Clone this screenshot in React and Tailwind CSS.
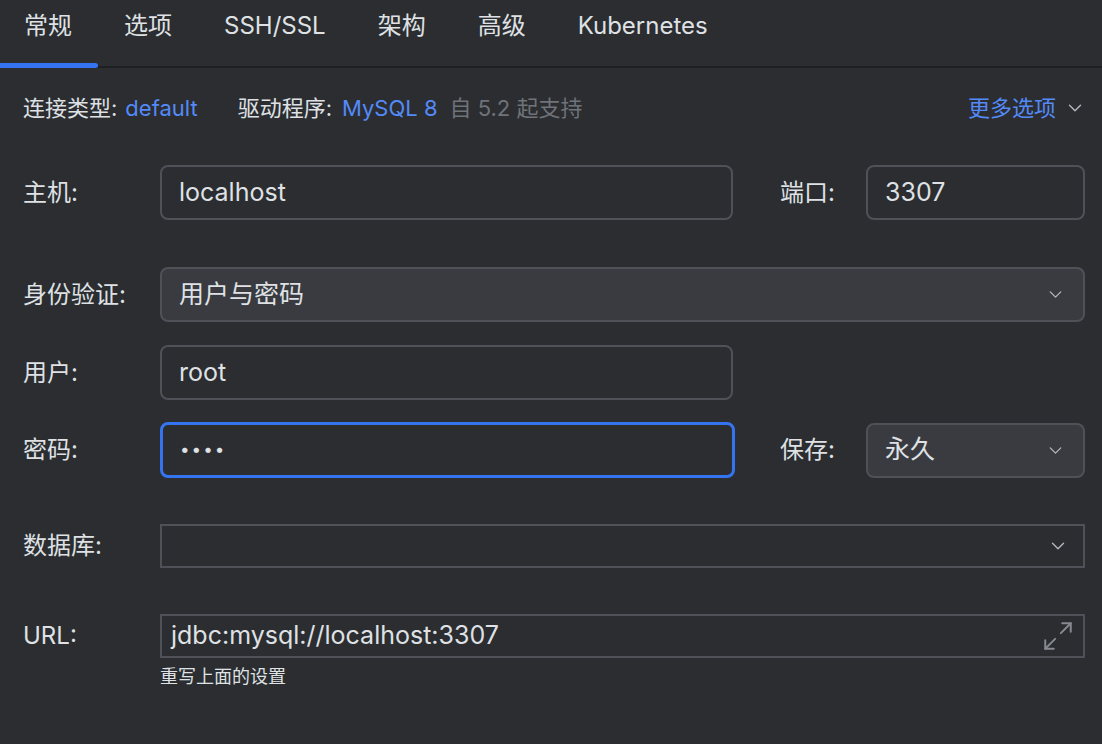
import React from 'react';
import { ChevronDown, Maximize2 } from 'lucide-react';

const font = { fontFamily: '"Inter", "Noto Sans CJK SC", sans-serif' };

const tabs = ['常规', '选项', 'SSH/SSL', '架构', '高级', 'Kubernetes'];

const Label = ({ children, className = '' }) => (
  <div className={`w-[137px] shrink-0 text-[24px] text-[#dfe1e5] ${className}`}>{children}</div>
);

const TextBox = ({ value, className = '' }) => (
  <div
    className={`flex items-center h-[55px] rounded-[8px] border-2 border-[#4e5157] px-[17px] text-[25px] text-[#dfe1e5] ${className}`}
  >
    {value}
  </div>
);

const Select = ({ value, className = '' }) => (
  <div
    className={`flex items-center justify-between h-[55px] rounded-[8px] border-2 border-[#4e5157] bg-[#393b40] px-[17px] text-[25px] text-[#dfe1e5] ${className}`}
  >
    <span>{value}</span>
    <ChevronDown size={21} strokeWidth={1.5} className="text-[#b4b8bf]" />
  </div>
);

export default function App() {
  return (
    <div className="w-[1102px] h-[744px] bg-[#2b2d30] overflow-hidden" style={font}>
      {/* tabs */}
      <div className="flex h-[68px] border-b-2 border-[#1e1f22]">
        {tabs.map((t, i) => (
          <div
            key={t}
            className={`relative pt-[10px] text-[24px] leading-[32px] text-[#dfe1e5] ${i === 0 ? 'pl-[24px] pr-[26px]' : 'px-[26px]'}`}
          >
            {t}
            {i === 0 && (
              <div className="absolute left-0 right-0 bottom-[-2px] h-[5px] rounded-r-full bg-[#3574f0]" />
            )}
          </div>
        ))}
      </div>

      {/* connection type row */}
      <div className="flex items-center justify-between h-[80px] pl-[23px] pr-[16px] text-[22px]">
        <div className="flex items-center">
          <span className="text-[#dfe1e5]">连接类型:</span>
          <span className="ml-[8px] text-[#548af7]">default</span>
          <span className="ml-[40px] text-[#dfe1e5]">驱动程序:</span>
          <span className="ml-[10px] text-[#548af7]">MySQL 8</span>
          <span className="ml-[12px] text-[#6f737a]">自 5.2 起支持</span>
        </div>
        <div className="flex items-center text-[#548af7]">
          更多选项
          <ChevronDown size={22} strokeWidth={1.5} className="ml-[8px] text-[#b4b8bf]" />
        </div>
      </div>

      <div className="pl-[23px] pr-[17px]">
        {/* host */}
        <div className="flex items-center mt-[17px]">
          <Label>主机:</Label>
          <TextBox value="localhost" className="w-[573px]" />
          <div className="ml-[47px] w-[86px] text-[24px] text-[#dfe1e5]">端口:</div>
          <TextBox value="3307" className="w-[219px]" />
        </div>

        {/* auth */}
        <div className="flex items-center mt-[47px]">
          <Label>身份验证:</Label>
          <Select value="用户与密码" className="flex-1" />
        </div>

        {/* user */}
        <div className="flex items-center mt-[23px]">
          <Label>用户:</Label>
          <TextBox value="root" className="w-[573px]" />
        </div>

        {/* password */}
        <div className="flex items-center mt-[22px]">
          <Label>密码:</Label>
          <div className="flex items-center h-[56px] w-[575px] rounded-[8px] border-[3px] border-[#3574f0] px-[17px] text-[17px] text-[#dfe1e5] tracking-[2px]">
            ••••
          </div>
          <div className="ml-[45px] w-[86px] text-[24px] text-[#dfe1e5]">保存:</div>
          <Select value="永久" className="w-[219px]" />
        </div>

        {/* database */}
        <div className="flex items-center mt-[46px]">
          <Label>数据库:</Label>
          <div className="flex-1 flex items-center justify-end h-[44px] border-2 border-[#4e5157] pr-[14px]">
            <ChevronDown size={22} strokeWidth={1.5} className="text-[#b4b8bf]" />
          </div>
        </div>

        {/* url */}
        <div className="flex items-center mt-[46px]">
          <Label>URL:</Label>
          <div className="flex-1 flex items-center justify-between h-[44px] border-2 border-[#4e5157] pl-[9px] pr-[8px] text-[25px] text-[#dfe1e5]">
            <span>jdbc:mysql://localhost:3307</span>
            <Maximize2 size={34} strokeWidth={1.4} className="text-[#868a91]" />
          </div>
        </div>
        <div className="ml-[137px] mt-[5px] text-[18px] text-[#dfe1e5]">重写上面的设置</div>
      </div>
    </div>
  );
}
